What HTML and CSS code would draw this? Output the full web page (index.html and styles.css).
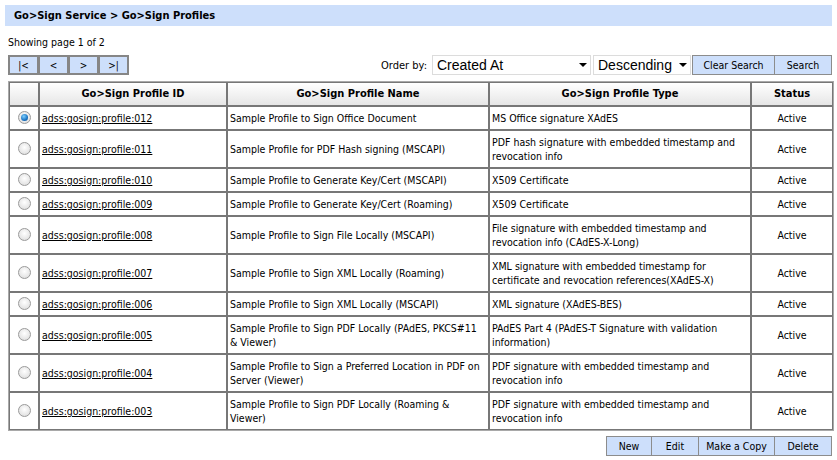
FILE: index.html
```html
<!DOCTYPE html>
<html>
<head>
<meta charset="utf-8">
<link rel="stylesheet" href="styles.css">
</head>
<body>
<div class="crumb">Go&gt;Sign Service &gt; Go&gt;Sign Profiles</div>
<div class="page-info">Showing page 1 of 2</div>
<div class="toolbar">
  <div class="pager">
    <button class="pbtn">|&lt;</button><button class="pbtn">&lt;</button><button class="pbtn">&gt;</button><button class="pbtn">&gt;|</button>
  </div>
  <div class="order">
    <span class="order-label">Order by:</span>
    <div class="sel sel-wide"><span>Created At</span><i class="caret"></i></div>
    <div class="sel sel-narrow"><span>Descending</span><i class="caret"></i></div>
    <button class="btn btn-clear">Clear Search</button><button class="btn btn-search">Search</button>
  </div>
</div>
<table class="grid">
  <colgroup><col class="c0"><col class="c1"><col class="c2"><col class="c3"><col class="c4"></colgroup>
  <thead>
    <tr><th></th><th>Go&gt;Sign Profile ID</th><th>Go&gt;Sign Profile Name</th><th>Go&gt;Sign Profile Type</th><th>Status</th></tr>
  </thead>
  <tbody>
    <tr><td class="rc"><span class="radio on"></span></td><td><a href="#">adss:gosign:profile:012</a></td><td>Sample Profile to Sign Office Document</td><td>MS Office signature XAdES</td><td class="st">Active</td></tr>
    <tr class="tall"><td class="rc"><span class="radio"></span></td><td><a href="#">adss:gosign:profile:011</a></td><td>Sample Profile for PDF Hash signing (MSCAPI)</td><td>PDF hash signature with embedded timestamp and revocation info</td><td class="st">Active</td></tr>
    <tr><td class="rc"><span class="radio"></span></td><td><a href="#">adss:gosign:profile:010</a></td><td>Sample Profile to Generate Key/Cert (MSCAPI)</td><td>X509 Certificate</td><td class="st">Active</td></tr>
    <tr><td class="rc"><span class="radio"></span></td><td><a href="#">adss:gosign:profile:009</a></td><td>Sample Profile to Generate Key/Cert (Roaming)</td><td>X509 Certificate</td><td class="st">Active</td></tr>
    <tr class="tall"><td class="rc"><span class="radio"></span></td><td><a href="#">adss:gosign:profile:008</a></td><td>Sample Profile to Sign File Locally (MSCAPI)</td><td>File signature with embedded timestamp and revocation info (CAdES-X-Long)</td><td class="st">Active</td></tr>
    <tr class="tall"><td class="rc"><span class="radio"></span></td><td><a href="#">adss:gosign:profile:007</a></td><td>Sample Profile to Sign XML Locally (Roaming)</td><td>XML signature with embedded timestamp for certificate and revocation references(XAdES-X)</td><td class="st">Active</td></tr>
    <tr><td class="rc"><span class="radio"></span></td><td><a href="#">adss:gosign:profile:006</a></td><td>Sample Profile to Sign XML Locally (MSCAPI)</td><td>XML signature (XAdES-BES)</td><td class="st">Active</td></tr>
    <tr class="tall"><td class="rc"><span class="radio"></span></td><td><a href="#">adss:gosign:profile:005</a></td><td>Sample Profile to Sign PDF Locally (PAdES, PKCS#11 &amp; Viewer)</td><td>PAdES Part 4 (PAdES-T Signature with validation information)</td><td class="st">Active</td></tr>
    <tr class="tall"><td class="rc"><span class="radio"></span></td><td><a href="#">adss:gosign:profile:004</a></td><td>Sample Profile to Sign a Preferred Location in PDF on Server (Viewer)</td><td>PDF signature with embedded timestamp and revocation info</td><td class="st">Active</td></tr>
    <tr class="tall"><td class="rc"><span class="radio"></span></td><td><a href="#">adss:gosign:profile:003</a></td><td>Sample Profile to Sign PDF Locally (Roaming &amp; Viewer)</td><td>PDF signature with embedded timestamp and revocation info</td><td class="st">Active</td></tr>
  </tbody>
</table>
<div class="actions">
  <button class="btn b-new">New</button><button class="btn b-edit">Edit</button><button class="btn b-copy">Make a Copy</button><button class="btn b-del">Delete</button>
</div>
</body>
</html>
```

FILE: styles.css
```css
html, body {
  margin: 0;
  padding: 0;
  background: #ffffff;
}
body {
  font-family: "DejaVu Sans Condensed", "DejaVu Sans", sans-serif;
  font-size: 10.5px;
  color: #000;
  width: 837px;
}
.crumb {
  margin: 5px 5px 0 5px;
  height: 21px;
  line-height: 21px;
  background: #cddffb;
  font-weight: bold;
  padding-left: 9px;
  font-size: 11px;
}
.page-info {
  margin: 10px 0 0 8px;
  height: 13px;
  line-height: 13px;
}
.toolbar {
  display: flex;
  justify-content: space-between;
  align-items: center;
  margin: 6px 5px 0 8px;
  height: 20px;
}
.pager {
  display: flex;
}
.pbtn {
  width: 31px;
  height: 20px;
  margin: 0 0 0 -1px;
  padding: 0;
  background: #cddffb;
  border: 2px solid #868686;
  font-family: inherit;
  font-size: 10px;
  color: #000;
}
.pbtn:first-child { margin-left: 0; }
.order {
  display: flex;
  align-items: center;
}
.order-label {
  margin-right: 5px;
  font-size: 11px;
}
.sel {
  display: flex;
  align-items: center;
  justify-content: space-between;
  height: 20px;
  box-sizing: border-box;
  border: 1px solid #dcdcdc;
  background: #fff;
  padding: 0 3px 0 4px;
  font-family: "Liberation Sans", Arial, sans-serif;
  font-size: 14px;
  margin-right: 2px;
}
.sel-wide { width: 159px; }
.sel-narrow { width: 98px; margin-right: 1px; }
.caret {
  width: 0;
  height: 0;
  border-left: 4px solid transparent;
  border-right: 4px solid transparent;
  border-top: 4px solid #000;
}
.btn {
  height: 20px;
  padding: 0;
  background: #cddffb;
  border: 1px solid #8c8c8c;
  font-family: inherit;
  font-size: 10.5px;
  color: #000;
  margin-left: -1px;
}
.btn:first-child { margin-left: 0; }
.btn-clear { width: 83px; margin-left: 0; }
.btn-search { width: 58px; }

.grid {
  margin: 6px 5px 0 8px;
  width: 824px;
  border-collapse: separate;
  border-spacing: 0;
  border: 1px solid #a9a9a9;
  table-layout: fixed;
}
.c0 { width: 30px; }
.c1 { width: 188px; }
.c2 { width: 262px; }
.c3 { width: 262px; }
.c4 { width: 82px; }
.grid th, .grid td {
  border: 1px solid #777;
  padding: 4px 2px 4px 2px;
  line-height: 14px;
  vertical-align: middle;
  text-align: left;
}
.grid th {
  height: 14px;
  padding: 4px 2px 4px 2px;
  background: linear-gradient(#ffffff, #e6e6e6);
  font-weight: bold;
  text-align: center;
  font-size: 11px;
}
.grid td { height: 14px; }
.grid tr.tall td { height: 28px; }
.grid a { color: #000; text-decoration: underline; }
.grid .rc { text-align: center; padding: 0; }
.grid .st { text-align: center; }
.radio {
  display: inline-block;
  width: 11px;
  height: 11px;
  border-radius: 50%;
  border: 1px solid #9a9a9a;
  background: radial-gradient(circle at 50% 40%, #ffffff 0%, #e4e4e4 70%, #cfcfcf 100%);
  vertical-align: middle;
  position: relative;
  top: -1px;
}
.radio.on::after {
  content: "";
  position: absolute;
  left: 2px;
  top: 2px;
  width: 7px;
  height: 7px;
  border-radius: 50%;
  background: radial-gradient(circle at 40% 35%, #7fd0ff 0%, #1a73c2 60%, #0b4a8a 100%);
}
.actions {
  display: flex;
  justify-content: flex-end;
  margin: 5px 5px 0 0;
}
.b-new { width: 46px; }
.b-edit { width: 48px; }
.b-copy { width: 77px; }
.b-del { width: 58px; }
```
